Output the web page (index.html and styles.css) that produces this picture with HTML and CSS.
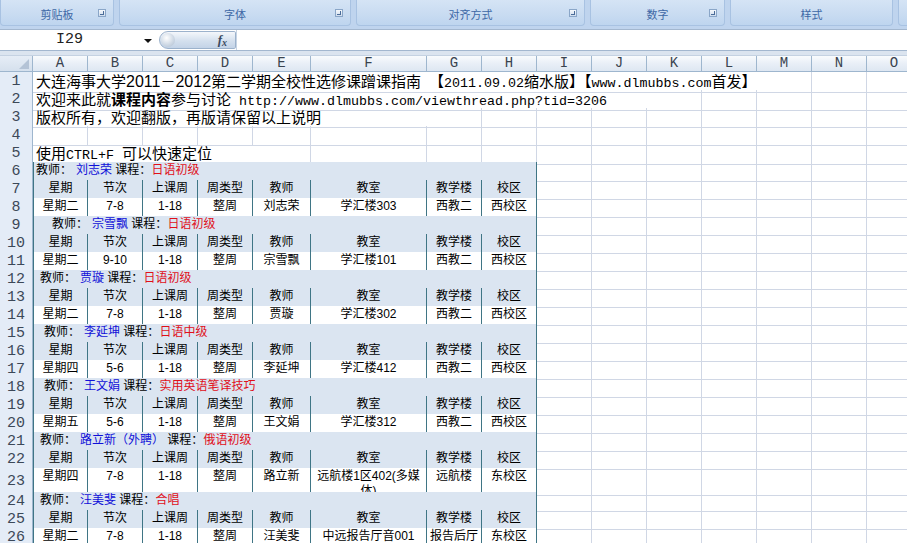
FILE: index.html
```html
<!DOCTYPE html>
<html lang="zh-CN">
<head>
<meta charset="utf-8">
<title>Excel</title>
<link rel="stylesheet" href="styles.css">
</head>
<body>
<div class="ribbon">
  <div class="group g1"><span>剪贴板</span><i class="launcher"></i></div>
  <div class="group g2"><span>字体</span><i class="launcher"></i></div>
  <div class="group g3"><span>对齐方式</span><i class="launcher"></i></div>
  <div class="group g4"><span>数字</span><i class="launcher"></i></div>
  <div class="group g5"><span>样式</span></div>
  <div class="group g6"></div>
</div>
<div class="fbar">
  <div class="namebox"><span class="nb-text">I29</span><i class="nb-arrow"></i></div>
  <div class="pill"><i class="knob"></i><span class="fx">f<sub>x</sub></span></div>
  <div class="finput"></div>
</div>
<div class="band"></div>
<div class="sheet">
  <div class="row hdr">
    <div class="corner"><i class="tri"></i></div>
    <div class="ch">A</div><div class="ch">B</div><div class="ch">C</div><div class="ch">D</div><div class="ch">E</div><div class="ch">F</div><div class="ch">G</div><div class="ch">H</div><div class="ch">I</div><div class="ch">J</div><div class="ch">K</div><div class="ch">L</div><div class="ch">M</div><div class="ch">N</div><div class="ch">O</div>
  </div>

  <div class="row">
    <div class="rh">1</div>
    <div class="c big s12">大连海事大学<span class="sd">2011</span>－<span class="sd">2012</span>第二学期全校性选修课蹭课指南<span class="lat"> </span>【<span class="lat">2011.09.02</span>缩水版】【<span class="lat">www.dlmubbs.com</span>首发】</div>
    <div class="c"></div><div class="c"></div><div class="c"></div>
  </div>
  <div class="row">
    <div class="rh">2</div>
    <div class="c big s10">欢迎来此就<b>课程内容</b>参与讨论<span class="lat"> http://www.dlmubbs.com/viewthread.php?tid=3206</span></div>
    <div class="c"></div><div class="c"></div><div class="c"></div><div class="c"></div><div class="c"></div>
  </div>
  <div class="row">
    <div class="rh">3</div>
    <div class="c big s6">版权所有，欢迎翻版，再版请保留以上说明</div>
    <div class="c"></div><div class="c"></div><div class="c"></div><div class="c"></div><div class="c"></div><div class="c"></div><div class="c"></div><div class="c"></div><div class="c"></div>
  </div>
  <div class="row">
    <div class="rh">4</div>
    <div class="c"></div><div class="c"></div><div class="c"></div><div class="c"></div><div class="c"></div><div class="c"></div><div class="c"></div><div class="c"></div><div class="c"></div><div class="c"></div><div class="c"></div><div class="c"></div><div class="c"></div><div class="c"></div><div class="c"></div>
  </div>
  <div class="row">
    <div class="rh">5</div>
    <div class="c big s4 tb">使用<span class="lat">CTRL+F </span>可以快速定位</div>
    <div class="c tb"></div><div class="c tb"></div><div class="c tb"></div><div class="c tb"></div>
    <div class="c"></div><div class="c"></div><div class="c"></div><div class="c"></div><div class="c"></div><div class="c"></div><div class="c"></div>
  </div>

  <!-- block 1 -->
  <div class="row">
    <div class="rh">6</div>
    <div class="c s8 tch ind0">教师：<span class="nm">刘志荣</span> 课程：<span class="cr">日语初级</span></div>
    <div class="c"></div><div class="c"></div><div class="c"></div><div class="c"></div><div class="c"></div><div class="c"></div><div class="c"></div>
  </div>
  <div class="row">
    <div class="rh">7</div>
    <div class="c th first">星期</div><div class="c th">节次</div><div class="c th">上课周</div><div class="c th">周类型</div><div class="c th">教师</div><div class="c th">教室</div><div class="c th">教学楼</div><div class="c th">校区</div>
    <div class="c"></div><div class="c"></div><div class="c"></div><div class="c"></div><div class="c"></div><div class="c"></div><div class="c"></div>
  </div>
  <div class="row">
    <div class="rh">8</div>
    <div class="c td first">星期二</div><div class="c td">7-8</div><div class="c td">1-18</div><div class="c td">整周</div><div class="c td">刘志荣</div><div class="c td">学汇楼303</div><div class="c td">西教二</div><div class="c td">西校区</div>
    <div class="c"></div><div class="c"></div><div class="c"></div><div class="c"></div><div class="c"></div><div class="c"></div><div class="c"></div>
  </div>

  <!-- block 2 -->
  <div class="row">
    <div class="rh">9</div>
    <div class="c s8 tch ind3">教师：<span class="nm">宗雪飘</span> 课程：<span class="cr">日语初级</span></div>
    <div class="c"></div><div class="c"></div><div class="c"></div><div class="c"></div><div class="c"></div><div class="c"></div><div class="c"></div>
  </div>
  <div class="row">
    <div class="rh">10</div>
    <div class="c th first">星期</div><div class="c th">节次</div><div class="c th">上课周</div><div class="c th">周类型</div><div class="c th">教师</div><div class="c th">教室</div><div class="c th">教学楼</div><div class="c th">校区</div>
    <div class="c"></div><div class="c"></div><div class="c"></div><div class="c"></div><div class="c"></div><div class="c"></div><div class="c"></div>
  </div>
  <div class="row">
    <div class="rh">11</div>
    <div class="c td first">星期二</div><div class="c td">9-10</div><div class="c td">1-18</div><div class="c td">整周</div><div class="c td">宗雪飘</div><div class="c td">学汇楼101</div><div class="c td">西教二</div><div class="c td">西校区</div>
    <div class="c"></div><div class="c"></div><div class="c"></div><div class="c"></div><div class="c"></div><div class="c"></div><div class="c"></div>
  </div>

  <!-- block 3 -->
  <div class="row">
    <div class="rh">12</div>
    <div class="c s8 tch ind1">教师：<span class="nm">贾璇</span> 课程：<span class="cr">日语初级</span></div>
    <div class="c"></div><div class="c"></div><div class="c"></div><div class="c"></div><div class="c"></div><div class="c"></div><div class="c"></div>
  </div>
  <div class="row">
    <div class="rh">13</div>
    <div class="c th first">星期</div><div class="c th">节次</div><div class="c th">上课周</div><div class="c th">周类型</div><div class="c th">教师</div><div class="c th">教室</div><div class="c th">教学楼</div><div class="c th">校区</div>
    <div class="c"></div><div class="c"></div><div class="c"></div><div class="c"></div><div class="c"></div><div class="c"></div><div class="c"></div>
  </div>
  <div class="row">
    <div class="rh">14</div>
    <div class="c td first">星期二</div><div class="c td">7-8</div><div class="c td">1-18</div><div class="c td">整周</div><div class="c td">贾璇</div><div class="c td">学汇楼302</div><div class="c td">西教二</div><div class="c td">西校区</div>
    <div class="c"></div><div class="c"></div><div class="c"></div><div class="c"></div><div class="c"></div><div class="c"></div><div class="c"></div>
  </div>

  <!-- block 4 -->
  <div class="row">
    <div class="rh">15</div>
    <div class="c s8 tch ind2">教师：<span class="nm">李延坤</span> 课程：<span class="cr">日语中级</span></div>
    <div class="c"></div><div class="c"></div><div class="c"></div><div class="c"></div><div class="c"></div><div class="c"></div><div class="c"></div>
  </div>
  <div class="row">
    <div class="rh">16</div>
    <div class="c th first">星期</div><div class="c th">节次</div><div class="c th">上课周</div><div class="c th">周类型</div><div class="c th">教师</div><div class="c th">教室</div><div class="c th">教学楼</div><div class="c th">校区</div>
    <div class="c"></div><div class="c"></div><div class="c"></div><div class="c"></div><div class="c"></div><div class="c"></div><div class="c"></div>
  </div>
  <div class="row">
    <div class="rh">17</div>
    <div class="c td first">星期四</div><div class="c td">5-6</div><div class="c td">1-18</div><div class="c td">整周</div><div class="c td">李延坤</div><div class="c td">学汇楼412</div><div class="c td">西教二</div><div class="c td">西校区</div>
    <div class="c"></div><div class="c"></div><div class="c"></div><div class="c"></div><div class="c"></div><div class="c"></div><div class="c"></div>
  </div>

  <!-- block 5 -->
  <div class="row">
    <div class="rh">18</div>
    <div class="c s8 tch ind2">教师：<span class="nm">王文娟</span> 课程：<span class="cr">实用英语笔译技巧</span></div>
    <div class="c"></div><div class="c"></div><div class="c"></div><div class="c"></div><div class="c"></div><div class="c"></div><div class="c"></div>
  </div>
  <div class="row">
    <div class="rh">19</div>
    <div class="c th first">星期</div><div class="c th">节次</div><div class="c th">上课周</div><div class="c th">周类型</div><div class="c th">教师</div><div class="c th">教室</div><div class="c th">教学楼</div><div class="c th">校区</div>
    <div class="c"></div><div class="c"></div><div class="c"></div><div class="c"></div><div class="c"></div><div class="c"></div><div class="c"></div>
  </div>
  <div class="row">
    <div class="rh">20</div>
    <div class="c td first">星期五</div><div class="c td">5-6</div><div class="c td">1-18</div><div class="c td">整周</div><div class="c td">王文娟</div><div class="c td">学汇楼312</div><div class="c td">西教二</div><div class="c td">西校区</div>
    <div class="c"></div><div class="c"></div><div class="c"></div><div class="c"></div><div class="c"></div><div class="c"></div><div class="c"></div>
  </div>

  <!-- block 6 -->
  <div class="row">
    <div class="rh">21</div>
    <div class="c s8 tch ind1">教师：<span class="nm">路立新（外聘）</span> 课程：<span class="cr">俄语初级</span></div>
    <div class="c"></div><div class="c"></div><div class="c"></div><div class="c"></div><div class="c"></div><div class="c"></div><div class="c"></div>
  </div>
  <div class="row">
    <div class="rh">22</div>
    <div class="c th first">星期</div><div class="c th">节次</div><div class="c th">上课周</div><div class="c th">周类型</div><div class="c th">教师</div><div class="c th">教室</div><div class="c th">教学楼</div><div class="c th">校区</div>
    <div class="c"></div><div class="c"></div><div class="c"></div><div class="c"></div><div class="c"></div><div class="c"></div><div class="c"></div>
  </div>
  <div class="row tall">
    <div class="rh">23</div>
    <div class="c td first">星期四</div><div class="c td">7-8</div><div class="c td">1-18</div><div class="c td">整周</div><div class="c td">路立新</div><div class="c td wrap">远航楼1区402(多媒<br>体)</div><div class="c td">远航楼</div><div class="c td">东校区</div>
    <div class="c"></div><div class="c"></div><div class="c"></div><div class="c"></div><div class="c"></div><div class="c"></div><div class="c"></div>
  </div>

  <!-- block 7 -->
  <div class="row">
    <div class="rh">24</div>
    <div class="c s8 tch ind1">教师：<span class="nm">汪美斐</span> 课程：<span class="cr">合唱</span></div>
    <div class="c"></div><div class="c"></div><div class="c"></div><div class="c"></div><div class="c"></div><div class="c"></div><div class="c"></div>
  </div>
  <div class="row">
    <div class="rh">25</div>
    <div class="c th first">星期</div><div class="c th">节次</div><div class="c th">上课周</div><div class="c th">周类型</div><div class="c th">教师</div><div class="c th">教室</div><div class="c th">教学楼</div><div class="c th">校区</div>
    <div class="c"></div><div class="c"></div><div class="c"></div><div class="c"></div><div class="c"></div><div class="c"></div><div class="c"></div>
  </div>
  <div class="row">
    <div class="rh">26</div>
    <div class="c td first">星期二</div><div class="c td">7-8</div><div class="c td">1-18</div><div class="c td">整周</div><div class="c td">汪美斐</div><div class="c td">中远报告厅音001</div><div class="c td">报告后厅</div><div class="c td">东校区</div>
    <div class="c"></div><div class="c"></div><div class="c"></div><div class="c"></div><div class="c"></div><div class="c"></div><div class="c"></div>
  </div>
</div>
</body>
</html>
```

FILE: styles.css
```css
* { box-sizing: border-box; margin: 0; padding: 0; }

body {
  width: 907px;
  height: 543px;
  overflow: hidden;
  background: #ffffff;
  font-family: "Liberation Sans", "Noto Sans CJK SC", sans-serif;
}

/* ---------- ribbon ---------- */
.ribbon {
  height: 29px;
  display: flex;
  gap: 5px;
  padding-bottom: 3px;
  background: #bfd4ee;
  overflow: hidden;
}
.group {
  position: relative;
  display: flex;
  align-items: center;
  justify-content: center;
  padding-top: 3px;
  background: linear-gradient(#d5e4f5, #c8dbf1 60%, #bed5ef);
  border: 1px solid #a8c2e2;
  border-top: none;
  border-radius: 0 0 4px 4px;
  color: #3d68a6;
  font-family: "Noto Sans CJK SC", sans-serif;
  font-size: 11px;
  line-height: 14px;
  flex: none;
}
.g1 { width: 114px; }
.g2 { width: 232px; }
.g3 { width: 229px; }
.g4 { width: 135px; }
.g5 { width: 163px; }
.g6 { width: 20px; }
.launcher {
  position: absolute;
  right: 7px;
  top: 9px;
  width: 8px;
  height: 8px;
  border: 1px solid #8aa6c8;
  background: linear-gradient(#f5f8fc, #cfdced);
}
.launcher::after {
  content: "";
  position: absolute;
  right: 1px;
  bottom: 1px;
  width: 3px;
  height: 3px;
  border-right: 1px solid #4a6c99;
  border-bottom: 1px solid #4a6c99;
}

/* ---------- formula bar ---------- */
.fbar {
  height: 22px;
  display: flex;
  background: #ffffff;
  border-top: 1px solid #a3b7cf;
  border-bottom: 1px solid #a3b7cf;
}
.namebox {
  position: relative;
  width: 159px;
  display: flex;
  align-items: center;
  justify-content: center;
  padding-right: 20px;
}
.nb-text {
  font-family: "Liberation Mono", monospace;
  font-size: 15px;
  line-height: 18px;
  color: #222;
}
.nb-arrow {
  position: absolute;
  right: 7px;
  top: 9px;
  width: 0;
  height: 0;
  border-left: 4px solid transparent;
  border-right: 4px solid transparent;
  border-top: 4px solid #111;
}
.pill {
  position: relative;
  width: 77px;
  height: 18px;
  margin-top: 1px;
  border: 1px solid #9cb2cc;
  border-radius: 10px 2px 2px 10px;
  background: linear-gradient(#f4f7fb, #d4e0ee 55%, #c3d3e7);
  display: flex;
  align-items: center;
  justify-content: flex-end;
  padding-right: 8px;
}
.knob {
  position: absolute;
  left: 1px;
  top: 1px;
  width: 14px;
  height: 14px;
  border-radius: 50%;
  background: radial-gradient(circle at 40% 35%, #ffffff, #cbd6e3 60%, #aebdd0);
}
.fx {
  font-family: "Liberation Serif", serif;
  font-style: italic;
  font-weight: bold;
  font-size: 13px;
  line-height: 14px;
  color: #3a4a60;
}
.fx sub { font-size: 10px; vertical-align: -2px; line-height: 10px; }
.finput { flex: 1; border-left: 1px solid #c6d3e3; }

.band {
  height: 5px;
  background: #dbe4ef;
  border-bottom: 1px solid #c5d2e2;
}

/* ---------- sheet ---------- */
.row {
  display: grid;
  grid-template-columns: 33px 55px 55px 55px 55px 58px 116px 55px 55px 55px 55px 55px 55px 55px 55px 55px;
  height: 18px;
}
.row.tall { height: 24px; }
.row.hdr { height: 16px; }

.corner {
  position: relative;
  background: linear-gradient(#e6edf6, #d5e0ed);
  border-right: 1px solid #9eb6ce;
  border-bottom: 1px solid #9eb6ce;
}
.tri {
  position: absolute;
  right: 3px;
  bottom: 2px;
  width: 0;
  height: 0;
  border-left: 10px solid transparent;
  border-bottom: 10px solid #b4c3d6;
}
.ch {
  background: linear-gradient(#f9fbfd, #e9eff7 50%, #dee7f2);
  border-right: 1px solid #9eb6ce;
  border-bottom: 1px solid #9eb6ce;
  font-family: "Liberation Mono", monospace;
  font-size: 14px;
  line-height: 15px;
  text-align: center;
  color: #39434f;
}
.rh {
  background: #e4ecf7;
  border-right: 1px solid #9eb6ce;
  border-bottom: 1px solid #b8cbe0;
  font-family: "Liberation Mono", monospace;
  font-size: 15px;
  line-height: 19px;
  text-align: center;
  color: #3c4858;
}
.tall .rh { line-height: 27px; }

.c {
  border-right: 1px solid #d0d7e5;
  border-bottom: 1px solid #d0d7e5;
  white-space: nowrap;
}
.s4 { grid-column: span 4; }
.s6 { grid-column: span 6; }
.s8 { grid-column: span 8; }
.s10 { grid-column: span 10; }
.s12 { grid-column: span 12; }

.big {
  font-family: "Noto Sans CJK SC", sans-serif;
  font-size: 15px;
  line-height: 17px;
  padding-left: 3px;
  color: #000;
  border-right-color: transparent;
}
.big b { font-weight: bold; }
.lat {
  font-family: "Liberation Mono", monospace;
  font-size: 13.33px;
}
.sd {
  font-family: "Liberation Sans", sans-serif;
  font-size: 16px;
}
.tb { border-bottom-color: #3f7585; }

/* table cells */
.tch, .th, .td {
  font-size: 12px;
  border-right: 1px solid #3f7585;
  border-bottom: 1px solid #3f7585;
  color: #000;
}
.tch {
  background: #dbe5f1;
  border-left: 1px solid #3f7585;
  line-height: 17px;
}
.th, .td {
  text-align: center;
  line-height: 17px;
}
.th { background: #dbe5f1; }
.td { background: #ffffff; }
.first { border-left: 1px solid #3f7585; }
.wrap {
  white-space: normal;
  overflow: hidden;
  line-height: 15px;
  padding-top: 1px;
}
.tall .td { line-height: 16px; }
.tall .wrap { line-height: 15px; }

.nm { color: #1010d8; margin-left: 4px; }
.cr { color: #e0101a; }
.ind0 { padding-left: 2px; }
.ind1 { padding-left: 6px; }
.ind2 { padding-left: 10px; }
.ind3 { padding-left: 18px; }
```
